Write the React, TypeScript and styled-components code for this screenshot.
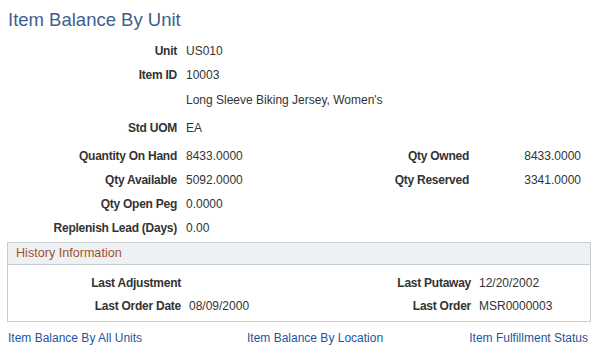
import styled, { createGlobalStyle } from "styled-components";

const GlobalStyle = createGlobalStyle`
  html, body {
    margin: 0;
    padding: 0;
    background: #ffffff;
  }

  body {
    font-family: "Liberation Sans", Arial, sans-serif;
    font-size: 12px;
    color: #333333;
  }
`;

type Field = { label: string; value?: string; rLabel?: string; rValue?: string; height: number };

const fields: Field[] = [
  { label: "Unit", value: "US010", height: 24 },
  { label: "Item ID", value: "10003", height: 24 },
  { label: "", value: "Long Sleeve Biking Jersey, Women's", height: 26 },
  { label: "Std UOM", value: "EA", height: 29 },
  { label: "Quantity On Hand", value: "8433.0000", rLabel: "Qty Owned", rValue: "8433.0000", height: 27 },
  { label: "Qty Available", value: "5092.0000", rLabel: "Qty Reserved", rValue: "3341.0000", height: 22 },
  { label: "Qty Open Peg", value: "0.0000", height: 26 },
  { label: "Replenish Lead (Days)", value: "0.00", height: 22 },
];

export default function App() {
  return (
    <Page>
      <GlobalStyle />
      <Title>Item Balance By Unit</Title>

      <FieldGrid>
        {fields.map((f, i) => (
          <Row key={i} $height={f.height}>
            <Label>{f.label}</Label>
            <Value>{f.value}</Value>
            <Label>{f.rLabel}</Label>
            <RightValue>{f.rValue}</RightValue>
          </Row>
        ))}
      </FieldGrid>

      <HistoryBox>
        <HistoryHeader>History Information</HistoryHeader>
        <HistoryBody>
          <HistoryRow>
            <Label>Last Adjustment</Label>
            <Value></Value>
            <Label>Last Putaway</Label>
            <Value>12/20/2002</Value>
          </HistoryRow>
          <HistoryRow>
            <Label>Last Order Date</Label>
            <Value>08/09/2000</Value>
            <Label>Last Order</Label>
            <Value>MSR0000003</Value>
          </HistoryRow>
        </HistoryBody>
      </HistoryBox>

      <Links>
        <Link href="#">Item Balance By All Units</Link>
        <Link href="#">Item Balance By Location</Link>
        <Link href="#">Item Fulfillment Status</Link>
      </Links>
    </Page>
  );
}

const Page = styled.div`
  width: 598px;
  height: 361px;
  overflow: hidden;
  padding-top: 8px;
  box-sizing: border-box;
`;

const Title = styled.h1`
  margin: 0 0 0 8px;
  height: 31px;
  line-height: 24px;
  font-family: "Liberation Sans", Arial, sans-serif;
  font-size: 18.5px;
  font-weight: normal;
  color: #3e5f8f;
`;

const FieldGrid = styled.div`
  display: flex;
  flex-direction: column;
`;

const Row = styled.div<{ $height: number }>`
  display: grid;
  grid-template-columns: 169px 130px 144px 103px;
  column-gap: 9px;
  align-items: center;
  height: ${(p) => p.$height}px;
  padding-left: 8px;
  white-space: nowrap;
`;

const Label = styled.div`
  text-align: right;
  font-weight: bold;
  letter-spacing: -0.25px;
  color: #333333;
`;

const Value = styled.div`
  color: #333333;
`;

const RightValue = styled(Value)`
  text-align: right;
`;

const HistoryBox = styled.div`
  margin: 3px 7px 0 7px;
  border: 1px solid #cbcdd0;
  height: 80px;
  box-sizing: border-box;
`;

const HistoryHeader = styled.div`
  height: 21px;
  line-height: 21px;
  padding-left: 8px;
  background: #eef1f3;
  border-bottom: 1px solid #cbcdd0;
  color: #a0522d;
  font-size: 12.6px;
`;

const HistoryBody = styled.div`
  display: flex;
  flex-direction: column;
  padding-top: 6px;
`;

const HistoryRow = styled.div`
  display: grid;
  grid-template-columns: 173px 120px 154px auto;
  column-gap: 8px;
  align-items: center;
  height: 23px;
  white-space: nowrap;
`;

const Links = styled.div`
  display: grid;
  grid-template-columns: 239px 1fr auto;
  align-items: center;
  height: 32px;
  padding: 0 10px 0 8px;
`;

const Link = styled.a`
  color: #1f55a0;
  text-decoration: none;
  font-size: 12px;
`;
